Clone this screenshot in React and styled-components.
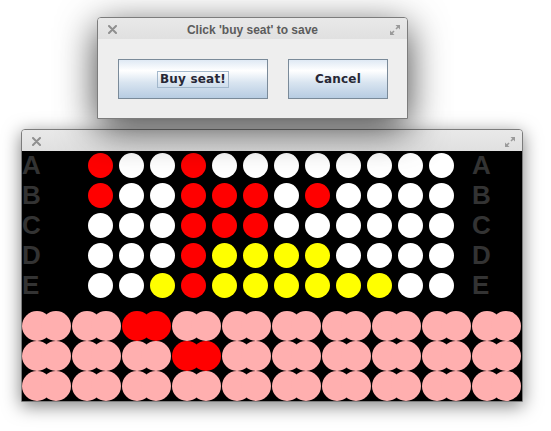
import styled, { createGlobalStyle } from 'styled-components'

const GlobalStyle = createGlobalStyle`
  html, body {
    margin: 0;
    padding: 0;
    background: #ffffff;
  }
  body {
    width: 551px;
    height: 431px;
    overflow: hidden;
    font-family: "Liberation Sans", Arial, sans-serif;
  }
`

const Desktop = styled.div`
  position: relative;
  width: 551px;
  height: 431px;
  background: #ffffff;
`

// windows sit on a free desktop, so they are placed by coordinates
const Window = styled.div`
  position: absolute;
  left: ${(p) => p.$x}px;
  top: ${(p) => p.$y}px;
  width: ${(p) => p.$w}px;
  box-sizing: border-box;
  display: flex;
  flex-direction: column;
  border: 1px solid #7c7c7c;
  border-radius: 4px 4px 0 0;
  background: #eeeeee;
  box-shadow: ${(p) => p.$shadow};
  z-index: ${(p) => p.$z};
`

const TitleBar = styled.div`
  height: 21px;
  display: grid;
  grid-template-columns: 28px 1fr 28px;
  align-items: center;
  background: linear-gradient(#e9e9e9, #e0e0e0);
  border-radius: 3px 3px 0 0;
`

const TitleText = styled.div`
  text-align: center;
  font-family: "Liberation Sans", Arial, sans-serif;
  font-weight: bold;
  font-size: 12px;
  color: #5c5c5c;
  padding-top: 3px;
`

const IconSlot = styled.div`
  display: flex;
  justify-content: ${(p) => (p.$right ? 'flex-end' : 'flex-start')};
  padding: ${(p) => (p.$right ? '2px 6px 0 0' : '2px 0 0 10px')};
`

const CloseIcon = () => (
  <svg width="9" height="9" viewBox="0 0 9 9">
    <path d="M1 1 L8 8 M8 1 L1 8" stroke="#8f8f8f" strokeWidth="2" strokeLinecap="round" />
  </svg>
)

const ExpandIcon = () => (
  <svg width="12" height="12" viewBox="0 0 12 12">
    <polygon points="6.5,1 11,1 11,5.5" fill="#9a9a9a" />
    <path d="M10.5 1.5 L7 5" stroke="#9a9a9a" strokeWidth="1.6" />
    <polygon points="1,6.5 1,11 5.5,11" fill="#9a9a9a" />
    <path d="M1.5 10.5 L5 7" stroke="#9a9a9a" strokeWidth="1.6" />
  </svg>
)

const DialogBody = styled.div`
  display: flex;
  gap: 20px;
  padding: 20px 19px 19px 20px;
`

const Button = styled.button`
  width: ${(p) => p.$w}px;
  height: 40px;
  box-sizing: border-box;
  display: flex;
  align-items: center;
  justify-content: center;
  border: 1px solid #7a8a99;
  border-radius: 0;
  padding: 0;
  background: linear-gradient(180deg, #dfe9f4 0%, #ffffff 28%, #d8e4f0 60%, #b7cce2 100%);
  font-family: "DejaVu Sans", Verdana, sans-serif;
  font-weight: bold;
  font-size: 12px;
  letter-spacing: 0.2px;
  color: #272735;
`

const FocusRing = styled.span`
  display: inline-block;
  border: 1px solid #a3b8cc;
  padding: 0 2px;
  line-height: 15px;
`

const BoardContent = styled.div`
  height: 250px;
  background: #000000;
  display: flex;
  flex-direction: column;
  padding-top: 2px;
  box-sizing: border-box;
`

const SeatBlock = styled.div`
  display: grid;
  grid-template-columns: 63px repeat(12, 31px) 1fr;
  grid-auto-rows: 30px;
`

const RowLabel = styled.div`
  font-family: "Liberation Sans", Arial, sans-serif;
  font-weight: bold;
  font-size: 26px;
  line-height: 24px;
  color: #333333;
  padding-left: ${(p) => (p.$right ? '15px' : '0')};
`

const Seat = styled.div`
  width: 25px;
  height: 25px;
  margin-left: 3px;
  border-radius: 50%;
  background: ${(p) => p.$color};
`

const PinkBlock = styled.div`
  display: flex;
  flex-direction: column;
  margin-top: 8px;
`

const PinkRow = styled.div`
  display: flex;
  gap: 1px;
  height: 30px;
`

const Pair = styled.div`
  display: flex;
  width: 49px;
`

const PairHalf = styled.div`
  width: 30px;
  height: 30px;
  flex: none;
  border-radius: 50%;
  background: ${(p) => (p.$taken ? '#ff0000' : '#ffafaf')};
  & + & {
    margin-left: -11px;
  }
`

const colours = { R: '#ff0000', W: '#ffffff', Y: '#ffff00' }

const seatRows = [
  { label: 'A', seats: 'RWWRWWWWWWWW' },
  { label: 'B', seats: 'RWWRRRWRWWWW' },
  { label: 'C', seats: 'WWWRRRWWWWWW' },
  { label: 'D', seats: 'WWWRYYYYWWWW' },
  { label: 'E', seats: 'WWYRYYYYYYWW' },
]

// index of the red pair in each pink row, -1 for none
const pinkTaken = [2, 3, -1]

function App() {
  return (
    <>
      <GlobalStyle />
      <Desktop>
        <Window $x={21} $y={129} $w={502} $z={1} $shadow="0 4px 18px rgba(0,0,0,0.5)">
          <TitleBar>
            <IconSlot>
              <CloseIcon />
            </IconSlot>
            <div />
            <IconSlot $right>
              <ExpandIcon />
            </IconSlot>
          </TitleBar>
          <BoardContent>
            <SeatBlock>
              {seatRows.map((row) => [
                <RowLabel key={`${row.label}-l`}>{row.label}</RowLabel>,
                ...row.seats.split('').map((c, i) => (
                  <Seat key={`${row.label}-${i}`} $color={colours[c]} />
                )),
                <RowLabel key={`${row.label}-r`} $right>{row.label}</RowLabel>,
              ])}
            </SeatBlock>
            <PinkBlock>
              {pinkTaken.map((taken, r) => (
                <PinkRow key={r}>
                  {Array.from({ length: 10 }).map((_, i) => (
                    <Pair key={i}>
                      <PairHalf $taken={i === taken} />
                      <PairHalf $taken={i === taken} />
                    </Pair>
                  ))}
                </PinkRow>
              ))}
            </PinkBlock>
          </BoardContent>
        </Window>

        <Window $x={97} $y={17} $w={311} $z={2} $shadow="0 10px 38px rgba(0,0,0,0.75)">
          <TitleBar>
            <IconSlot>
              <CloseIcon />
            </IconSlot>
            <TitleText>Click 'buy seat' to save</TitleText>
            <IconSlot $right>
              <ExpandIcon />
            </IconSlot>
          </TitleBar>
          <DialogBody>
            <Button $w={150}>
              <FocusRing>Buy seat!</FocusRing>
            </Button>
            <Button $w={100}>Cancel</Button>
          </DialogBody>
        </Window>
      </Desktop>
    </>
  )
}

export default App
